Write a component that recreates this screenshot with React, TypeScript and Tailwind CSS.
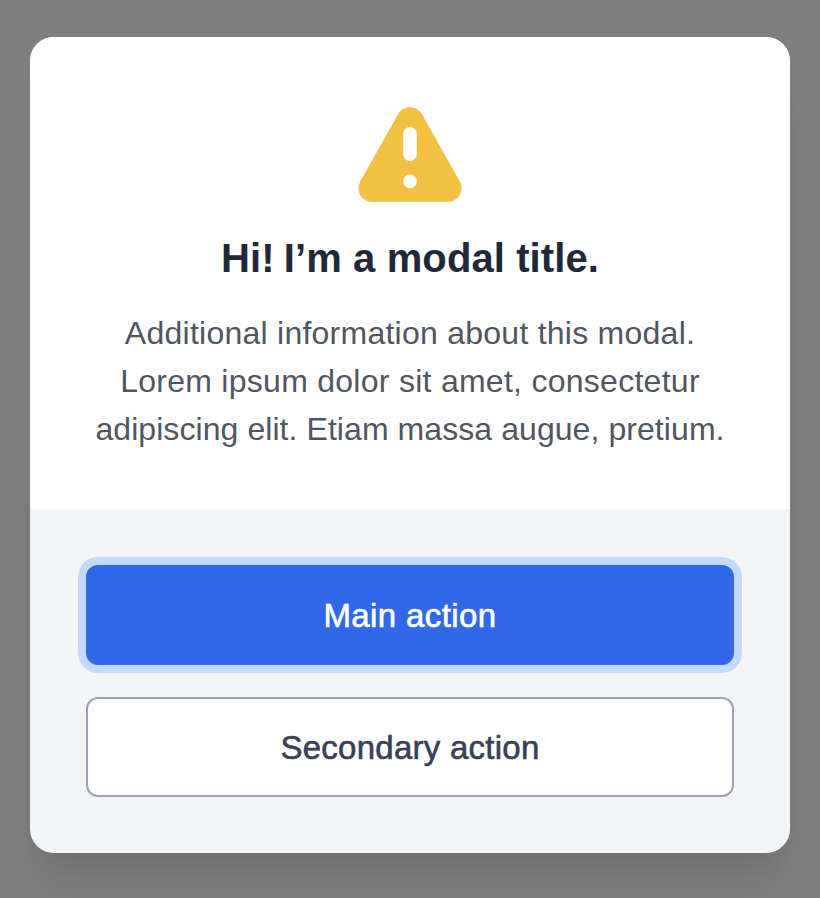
export default function App() {
  return (
    <div className="flex h-[898px] w-full items-start justify-center overflow-hidden bg-[#7f7f7f] pt-[37px] font-['Liberation_Sans',Arial,sans-serif]">
      <section className="h-[816px] w-[760px] overflow-hidden rounded-3xl bg-[#f3f4f6] shadow-[0_40px_50px_-10px_rgba(0,0,0,0.1),0_20px_20px_-10px_rgba(0,0,0,0.04)]">
        <div className="flex h-[472px] flex-col items-center bg-white pt-14">
          <svg className="size-[136px]" viewBox="0 0 20 20" fill="#f2c043">
            <path
              fillRule="evenodd"
              clipRule="evenodd"
              d="M8.257 3.099c.765-1.36 2.722-1.36 3.486 0l5.58 9.92c.75 1.334-.213 2.98-1.742 2.98H4.42c-1.53 0-2.493-1.646-1.743-2.98l5.58-9.92zM11 13a1 1 0 11-2 0 1 1 0 012 0zm-1-8a1 1 0 00-1 1v3a1 1 0 102 0V6a1 1 0 00-1-1z"
            />
          </svg>
          <h1 className="mt-[5px] whitespace-nowrap text-[40px] leading-[48px] font-bold tracking-[0.1px] text-[#212938]">
            Hi! <span className="-ml-0.5">I’m</span> a modal title.
          </h1>
          <p className="mt-[27px] text-center text-[32px] leading-[48px] whitespace-nowrap text-[#4f5662]">
            <span className="block tracking-[0.25px]">Additional information about this modal.</span>
            <span className="block tracking-[0.27px]">Lorem ipsum dolor sit amet, consectetur</span>
            <span className="block tracking-[0.07px]">adipiscing elit. Etiam massa augue, pretium.</span>
          </p>
        </div>
        <div className="flex flex-col gap-8 px-14 pt-14">
          <button className="h-[100px] rounded-xl bg-[#3068e8] pt-0.5 text-[33px] tracking-[0.4px] text-white ring-8 ring-[#c4dafa] [-webkit-text-stroke:0.6px_#ffffff]">
            Main action
          </button>
          <button className="h-[100px] rounded-xl border-2 border-[#9aa3b6] bg-white pt-0.5 text-[33px] tracking-[0.25px] text-[#374055] [-webkit-text-stroke:0.6px_#374055]">
            Secondary action
          </button>
        </div>
      </section>
    </div>
  );
}
